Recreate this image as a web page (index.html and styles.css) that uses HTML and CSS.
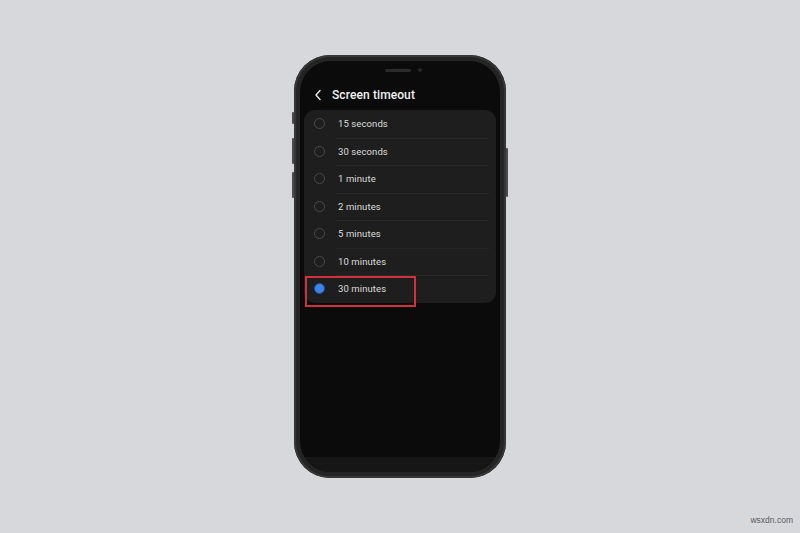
FILE: index.html
```html
<!DOCTYPE html>
<html lang="en">

<head>
    <meta charset="UTF-8">
    <meta name="viewport" content="width=device-width, initial-scale=1.0">
    <title>Screen timeout</title>
    <link rel="stylesheet" href="styles.css">
</head>

<body>
    <div class="stage">
        <div class="phone">
            <span class="key key-mute"></span>
            <span class="key key-up"></span>
            <span class="key key-down"></span>
            <span class="key key-power"></span>
            <div class="screen">
                <div class="notch">
                    <span class="speaker"></span>
                    <span class="camera"></span>
                </div>
                <div class="title-bar">
                    <svg class="back" width="8" height="12" viewBox="0 0 8 12">
                        <path d="M6 1.5 L2 6 L6 10.5" fill="none" stroke="#e8e8e8" stroke-width="1.4" stroke-linecap="round" stroke-linejoin="round"/>
                    </svg>
                    <span class="title">Screen timeout</span>
                </div>
                <ul class="options">
                    <li class="option"><span class="radio"></span><span class="label">15 seconds</span></li>
                    <li class="option"><span class="radio"></span><span class="label">30 seconds</span></li>
                    <li class="option"><span class="radio"></span><span class="label">1 minute</span></li>
                    <li class="option"><span class="radio"></span><span class="label">2 minutes</span></li>
                    <li class="option"><span class="radio"></span><span class="label">5 minutes</span></li>
                    <li class="option"><span class="radio"></span><span class="label">10 minutes</span></li>
                    <li class="option selected"><span class="radio"></span><span class="label">30 minutes</span><span class="mark"></span></li>
                </ul>
                <div class="spacer"></div>
                <div class="nav-bar"></div>
            </div>
        </div>
    </div>
    <span class="site">wsxdn.com</span>
</body>

</html>
```

FILE: styles.css
```css
* {
    box-sizing: border-box;
}

body {
    margin: 0;
    width: 800px;
    height: 533px;
    background: #d6d8dc;
    font-family: Roboto, "Liberation Sans", sans-serif;
    position: relative;
    overflow: hidden;
}

.stage {
    display: flex;
    justify-content: center;
    padding-top: 55px;
}

.phone {
    position: relative;
    width: 212px;
    height: 423px;
    padding: 6px;
    border-radius: 36px;
    background: #242424;
    box-shadow: inset 0 0 0 2px #363636;
}

/* side keys */
.key {
    position: absolute;
    width: 2px;
    background: #4a4a4c;
    border-radius: 1px;
}

.key-mute {
    left: -2px;
    top: 57px;
    height: 12px;
}

.key-up {
    left: -2px;
    top: 83px;
    height: 26px;
}

.key-down {
    left: -2px;
    top: 117px;
    height: 26px;
}

.key-power {
    right: -2px;
    top: 93px;
    height: 49px;
}

.screen {
    height: 100%;
    border-radius: 31px;
    background: #0b0b0b;
    overflow: hidden;
    display: flex;
    flex-direction: column;
}

.notch {
    display: flex;
    justify-content: center;
    align-items: center;
    gap: 7px;
    height: 16px;
    padding-left: 6px;
    margin-top: 1px;
}

.speaker {
    width: 26px;
    height: 3px;
    border-radius: 2px;
    background: #2b2b2b;
}

.camera {
    width: 4px;
    height: 4px;
    border-radius: 50%;
    background: #262a30;
}

.title-bar {
    display: flex;
    align-items: center;
    height: 26px;
    padding-left: 14px;
    gap: 10px;
    margin-top: 4px;
}

.back {
    display: block;
}

.title {
    color: #f2f2f2;
    font-size: 12px;
    font-weight: 500;
    letter-spacing: 0.1px;
}

.options {
    list-style: none;
    margin: 2px 4px 0;
    padding: 0;
    background: #1e1e1e;
    border-radius: 11px;
}

.option {
    position: relative;
    display: flex;
    align-items: center;
    height: 27.5px;
    padding-left: 10px;
}

.option + .option::before {
    content: "";
    position: absolute;
    left: 32px;
    right: 7px;
    top: 0;
    border-top: 1px solid #282828;
}

.radio {
    width: 11px;
    height: 11px;
    border-radius: 50%;
    border: 1.3px solid #4a4a4a;
    flex-shrink: 0;
}

.selected .radio {
    border: 1.5px solid #1f4f9a;
    background: #3c83ea;
}

.label {
    margin-left: 13px;
    color: #dcdcdc;
    font-size: 9.5px;
    letter-spacing: 0.1px;
}

/* red highlight around the chosen option */
.mark {
    position: absolute;
    left: 1px;
    top: 1px;
    width: 111px;
    height: 31px;
    border: 2px solid #d2303a;
}

.spacer {
    flex: 1;
}

.nav-bar {
    height: 15px;
    background: #161616;
}

.site {
    position: absolute;
    right: 7px;
    bottom: 8px;
    font-size: 8.5px;
    color: #5a5c60;
    font-family: "Liberation Sans", sans-serif;
}
```
